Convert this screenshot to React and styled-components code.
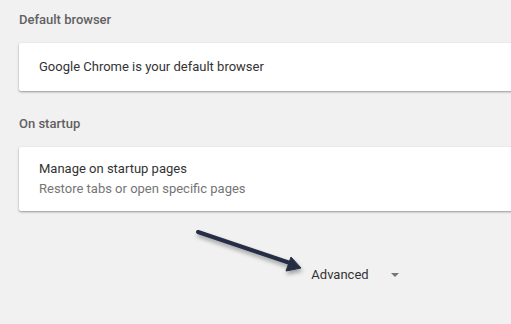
import React from "react";
import styled, { createGlobalStyle } from "styled-components";

const GlobalStyle = createGlobalStyle`
  html, body {
    margin: 0;
    padding: 0;
    background: #f1f1f1;
    overflow: hidden;
  }
  body {
    font-family: Roboto, "Liberation Sans", sans-serif;
    -webkit-font-smoothing: antialiased;
  }
`;

const Page = styled.div`
  position: relative;
  width: 511px;
  height: 324px;
  overflow: hidden;
`;

const Column = styled.div`
  width: 672px;
  margin-left: 19px;
  padding-top: 11px;
`;

const SectionTitle = styled.div`
  font-size: 13px;
  font-weight: 500;
  line-height: 18px;
  color: #616161;
  margin: ${(p) => (p.$first ? "0" : "24px")} 0 14px 0;
`;

const Card = styled.div`
  background: #fff;
  border-radius: 2px;
  box-shadow: 0 1px 2px rgba(0, 0, 0, 0.28), 0 1px 3px rgba(0, 0, 0, 0.12);
  padding: 0 20px;
  min-height: ${(p) => p.$height}px;
  display: flex;
  flex-direction: column;
  justify-content: center;
`;

const Primary = styled.div`
  font-size: 13px;
  line-height: 20px;
  color: #333;
`;

const Secondary = styled.div`
  font-size: 13px;
  line-height: 20px;
  color: #757575;
`;

const AdvancedRow = styled.div`
  display: flex;
  justify-content: center;
  align-items: center;
  margin-top: 53px;
  height: 20px;
`;

const AdvancedButton = styled.div`
  display: flex;
  align-items: center;
  gap: 22px;
  font-size: 13px;
  color: #333;
  cursor: pointer;
`;

const Caret = styled.span`
  width: 0;
  height: 0;
  border-left: 4px solid transparent;
  border-right: 4px solid transparent;
  border-top: 4px solid #757575;
  margin-top: 1px;
`;

const Annotation = styled.svg`
  position: absolute;
  left: 0;
  top: 0;
  pointer-events: none;
`;

function App() {
  return (
    <Page>
      <GlobalStyle />
      <Column>
        <SectionTitle $first>Default browser</SectionTitle>
        <Card $height={48}>
          <Primary>Google Chrome is your default browser</Primary>
        </Card>

        <SectionTitle>On startup</SectionTitle>
        <Card $height={64}>
          <Primary>Manage on startup pages</Primary>
          <Secondary>Restore tabs or open specific pages</Secondary>
        </Card>

        <AdvancedRow>
          <AdvancedButton>
            Advanced
            <Caret />
          </AdvancedButton>
        </AdvancedRow>
      </Column>

      <Annotation width="511" height="324" viewBox="0 0 511 324">
        <defs>
          <filter id="arrowShadow" x="-20%" y="-50%" width="140%" height="200%">
            <feDropShadow dx="1" dy="3" stdDeviation="2" floodColor="#000" floodOpacity="0.35" />
          </filter>
        </defs>
        <g filter="url(#arrowShadow)" fill="#262f45" stroke="#262f45">
          <line x1="198" y1="232" x2="290" y2="263" strokeWidth="4" strokeLinecap="round" />
          <polygon points="301,268 286,271 291,257" strokeWidth="1" strokeLinejoin="round" />
        </g>
      </Annotation>
    </Page>
  );
}

export default App;
